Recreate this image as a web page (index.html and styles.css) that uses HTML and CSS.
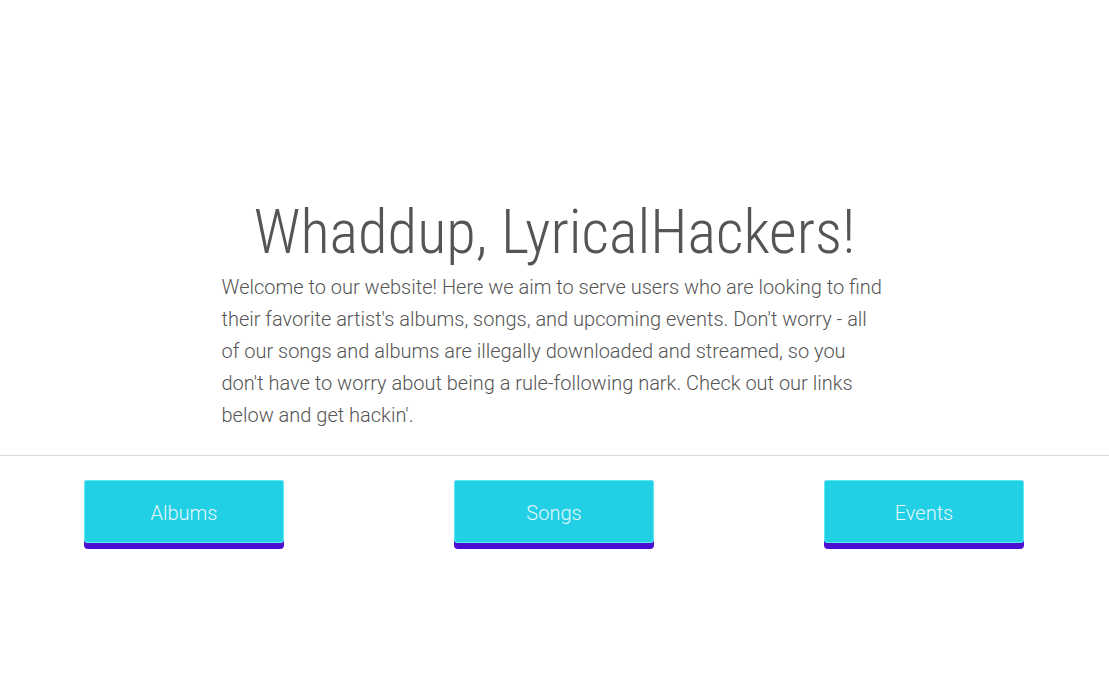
FILE: index.html
```html
<!DOCTYPE html>
<html>
<head>
<meta charset="utf-8">
<link rel="stylesheet" href="styles.css">
</head>
<body>
<header class="hero">
  <h1 class="title">Whaddup, LyricalHackers!</h1>
</header>
<main class="intro">
  <p class="lead">Welcome to our website! Here we aim to serve users who are looking to find their favorite artist's albums, songs, and upcoming events. Don't worry - all of our songs and albums are illegally downloaded and streamed, so you don't have to worry about being a rule-following nark. Check out our links below and get hackin'.</p>
</main>
<hr class="divider">
<nav class="links">
  <a class="btn" href="#"><span class="btn-face">Albums</span></a>
  <a class="btn" href="#"><span class="btn-face">Songs</span></a>
  <a class="btn" href="#"><span class="btn-face">Events</span></a>
</nav>
</body>
</html>
```
FILE: styles.css
```css
html, body {
  margin: 0;
  padding: 0;
  background: #fff;
}
body {
  font-family: Roboto, "Liberation Sans", sans-serif;
  font-weight: 300;
  color: #555;
}
.hero {
  padding-top: 196px;
  display: flex;
  justify-content: center;
}
.title {
  margin: 0;
  font-family: "Roboto Condensed", Roboto, "Liberation Sans", sans-serif;
  font-size: 60.5px;
  font-weight: 300;
  line-height: 74px;
  white-space: nowrap;
  color: #555;
}
.intro {
  width: 666px;
  margin: 0 auto;
}
.lead {
  margin: 1px 0 0;
  font-size: 20px;
  line-height: 32px;
  color: #555;
}
.divider {
  margin: 24px 0 0;
  border: 0;
  border-top: 1px solid #d9d9d9;
  height: 0;
}
.links {
  display: flex;
  justify-content: space-between;
  padding: 24px 85px 0 84px;
}
.btn {
  display: block;
  width: 200px;
  padding-bottom: 6px;
  background: #4a0fd3;
  border-radius: 4px;
  text-decoration: none;
}
.btn-face {
  display: flex;
  align-items: center;
  justify-content: center;
  box-sizing: border-box;
  height: 63px;
  padding-top: 2px;
  background: #22d0e6;
  border: 1px solid #5ceaf5;
  border-radius: 3px;
  color: #e3f6fa;
  font-size: 20px;
  font-weight: 300;
}
```
